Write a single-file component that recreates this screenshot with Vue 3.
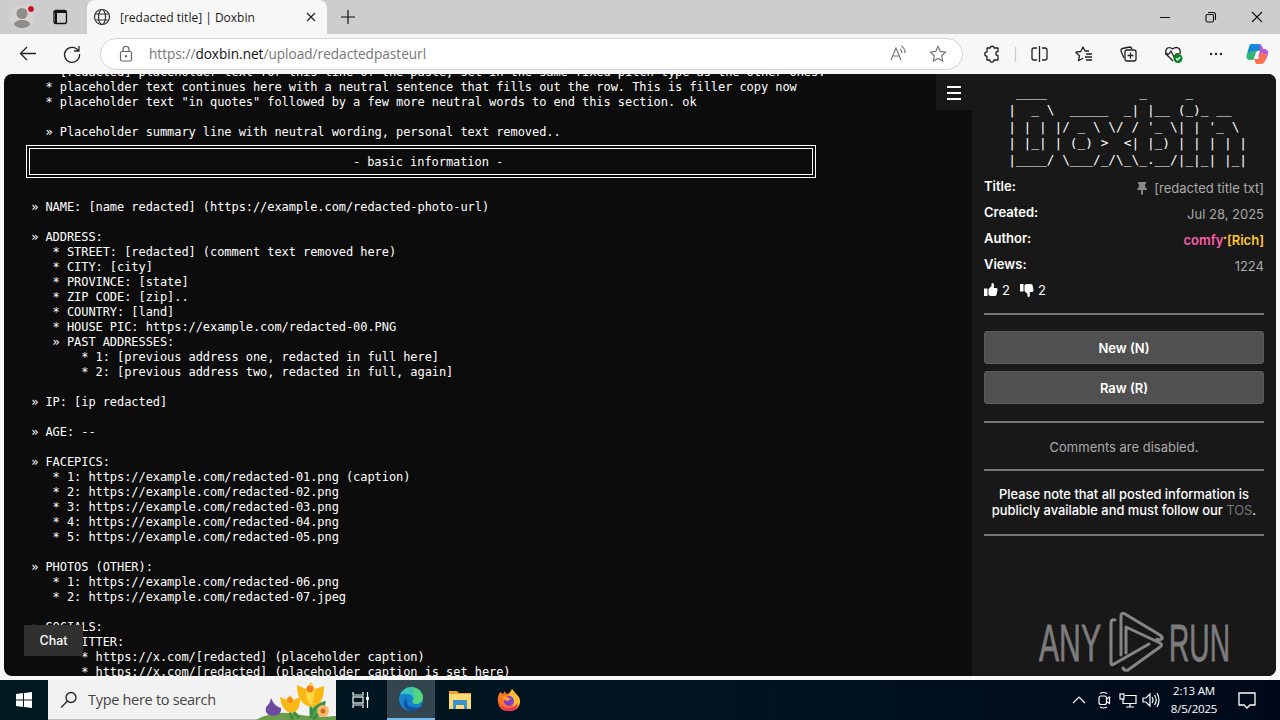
<script setup>
const intro = [
  '   * [redacted] placeholder text for this line of the paste, set in the same fixed pitch type as the other ones.',
  '   * placeholder text continues here with a neutral sentence that fills out the row. This is filler copy now',
  '   * placeholder text "in quotes" followed by a few more neutral words to end this section. ok',
  '',
  '   » Placeholder summary line with neutral wording, personal text removed..',
]
const info = [
  ' » NAME: [name redacted] (https://example.com/redacted-photo-url)',
  '',
  ' » ADDRESS:',
  '    * STREET: [redacted] (comment text removed here)',
  '    * CITY: [city]',
  '    * PROVINCE: [state]',
  '    * ZIP CODE: [zip]..',
  '    * COUNTRY: [land]',
  '    * HOUSE PIC: https://example.com/redacted-00.PNG',
  '    » PAST ADDRESSES:',
  '        * 1: [previous address one, redacted in full here]',
  '        * 2: [previous address two, redacted in full, again]',
  '',
  ' » IP: [ip redacted]',
  '',
  ' » AGE: --',
  '',
  ' » FACEPICS:',
  '    * 1: https://example.com/redacted-01.png (caption)',
  '    * 2: https://example.com/redacted-02.png',
  '    * 3: https://example.com/redacted-03.png',
  '    * 4: https://example.com/redacted-04.png',
  '    * 5: https://example.com/redacted-05.png',
  '',
  ' » PHOTOS (OTHER):',
  '    * 1: https://example.com/redacted-06.png',
  '    * 2: https://example.com/redacted-07.jpeg',
  '',
  ' » SOCIALS:',
  '    » TWITTER:',
  '        * https://x.com/[redacted] (placeholder caption)',
  '        * https://x.com/[redacted] (placeholder caption is set here)',
]
const logo = [
  '  ____            _     _       ',
  ' |  _ \\  _____  _| |__ (_)_ __  ',
  " | | | |/ _ \\ \\/ / '_ \\| | '_ \\ ",
  ' | |_| | (_) >  <| |_) | | | | |',
  ' |____/ \\___/_/\\_\\_.__/|_|_| |_|',
].join('\n')
</script>

<template>
  <div class="screen">
    <header class="tabs">
      <svg class="profile" width="87" height="34" fill="none">
        <circle cx="22" cy="17" r="12" fill="#d5d3d1" />
        <circle cx="22" cy="13.500" r="5.500" fill="#8e8b88" />
        <ellipse cx="22" cy="24" rx="8" ry="4" fill="#8e8b88" />
        <circle cx="31" cy="9" r="3.500" fill="#c50f1f" stroke="#ddd" />
        <rect x="54" y="10.500" width="12.500" height="13" rx="2" stroke="#111" stroke-width="1.300" />
        <path d="M54 12h12.500M56 13v10" stroke="#111" stroke-width="2" />
      </svg>
      <div class="tab">
        <svg width="18" height="18" fill="none" stroke="#333" stroke-width="1.200">
          <circle cx="9" cy="9" r="7.500" /><ellipse cx="9" cy="9" rx="3.500" ry="7.500" /><path d="M2.500 6h13M2.500 12h13" />
        </svg>
        <span class="tab-title">[redacted title] | Doxbin</span>
        <svg width="10" height="10" stroke="#222" stroke-width="1.200"><path d="M1 1l8 8M9 1l-8 8" /></svg>
      </div>
      <svg class="plus" width="14" height="14" stroke="#111" stroke-width="1.200"><path d="M7 0v14M0 7h14" /></svg>
      <svg class="win" width="110" height="20" fill="none" stroke="#111" stroke-width="1.100">
        <path d="M4 10.500h10M96 5l10 10M106 5l-10 10" />
        <rect x="50" y="7.500" width="7.500" height="7.500" rx="1.500" /><path d="M52 5.500h5q2.500 0 2.500 2.500v5" />
      </svg>
    </header>

    <nav class="toolbar">
      <svg class="nav" width="100" height="40" fill="none" stroke="#222" stroke-width="1.300">
        <path d="M36 19.500H20.500M27 13L20.500 19.500l6.500 6.500" />
        <path d="M78.500 17A7.500 7.500 0 1 0 79.500 20M79 12v5h-5" />
      </svg>
      <div class="address">
        <svg width="14" height="16" fill="none" stroke="#666" stroke-width="1.200">
          <rect x="1.500" y="5.500" width="11" height="9.500" rx="1.500" /><path d="M4 5.500V3.500a3 3 0 0 1 6 0v2" /><circle cx="7" cy="10.200" r=".6" fill="#666" />
        </svg>
        <span class="url">https://<b>doxbin.net</b>/upload/redactedpasteurl</span>
        <svg class="addr-icons" width="60" height="20" fill="none" stroke="#777" stroke-width="1.200">
          <path d="M1 16L6 4l5 12M3 12h6M10 5q2 1.500 2 4M11 2q4 2 4 7" />
          <path d="M48 2.500l2.300 4.900 5.300.7-3.900 3.700 1 5.300-4.700-2.600-4.700 2.600 1-5.300-3.900-3.700 5.300-.7z" />
        </svg>
      </div>
      <svg class="tools" width="317" height="40" fill="none" stroke="#222" stroke-width="1.300" stroke-linejoin="round">
        <path d="M24 14h3a2.200 2.200 0 0 1 4.300 0H35v3.500a2 2 0 0 0 0 4.200V26h-4a2.100 2.100 0 0 1-4.200 0H24v-3.800a2.200 2.200 0 0 1 0-4.400z" />
        <path d="M52.500 13v15" stroke="#ccc" />
        <path d="M76.500 12v16M74 14h-3q-2 0-2 2v8q0 2 2 2h3M79 14h3q2 0 2 2v8q0 2-2 2h-3" />
        <path d="M126 17h-4l-2-4-2.200 4.500-5 .7 3.700 3.500-1 5 4.500-2.500M123 20h6M122 23h7M123 26h6" />
        <path d="M161 24l-3-7q-.5-2 1.500-2.500l7-1.500q2 0 2.500 2" /><rect x="162" y="16" width="11" height="11" rx="2" /><path d="M167.500 18.500v6M164.500 21.500h6" />
        <path d="M210 27l-6.500-6.500q-2-4 1-6.500 3-1 5 1 4-3 7 0 1.500 3 0 5M202 20h4l2-3 3 6 2-3h3" />
        <circle cx="215" cy="24.500" r="4.500" fill="#0b8526" stroke="none" /><path d="M213 24.500l1.500 1.500 2.700-3" stroke="#fff" />
        <g fill="#222" stroke="none"><circle cx="248" cy="20" r="1.200" /><circle cx="253" cy="20" r="1.200" /><circle cx="258" cy="20" r="1.200" /></g>
        <g stroke="none">
          <path d="M288 10h9l2 6-5 1-3 8h-4q-5 0-3-5l2-7q.5-3 2-3z" fill="#1788dc" />
          <path d="M284 19l9-3-3 10h-4q-3-.5-2-5z" fill="#35b76b" />
          <path d="M296 10q3 0 4 5h2q4 1 3 5l-2 6-9-4 3-7z" fill="#b55bdc" />
          <path d="M304 20l-2 7q-1 3-4 3h-5l-2-5h4l3-6z" fill="#fb7352" />
          <path d="M293 18l4-1-2 6-4 1z" fill="#f7f7f7" />
        </g>
      </svg>
    </nav>

    <main class="page">
      <section class="paste">
        <pre class="lines"><div v-for="(l, i) in intro" :key="i">{{ l }}</div></pre>
        <div class="banner">- basic information -</div>
        <pre class="lines info"><div v-for="(l, i) in info" :key="i">{{ l }}</div></pre>
        <div class="menu"><i /><i /><i /></div>
        <button class="chat">Chat</button>
      </section>

      <aside class="side">
        <pre class="logo">{{ logo }}</pre>
        <dl>
          <div><dt>Title:</dt><dd>
            <svg width="10" height="13" fill="#888"><path d="M1 0h8v2H8l.4 3.500Q10 6.500 10 8H6v4l-1 1-1-1V8H0q0-1.500 1.600-2.500L2 2H1z" /></svg>[redacted title txt]
          </dd></div>
          <div><dt>Created:</dt><dd>Jul 28, 2025</dd></div>
          <div><dt>Author:</dt><dd class="author"><span>comfy</span><i>•</i>[Rich]</dd></div>
          <div><dt>Views:</dt><dd>1224</dd></div>
        </dl>
        <div class="votes">
          <svg width="14" height="14" fill="#fff"><path d="M0 5.500h3.500V13H0zM4.500 6l3-3V1q0-1 1-1 2 0 1.200 5H12q2 0 1.500 2L12.500 12q-.5 1-2 1h-4l-2-1z" /></svg>2
          <svg class="down" width="14" height="14" fill="#fff"><path d="M0 1h3.500v7.500H0zM4.500 8l3 3v2q0 1 1 1 2 0 1.200-5H12q2 0 1.500-2L12.500 2q-.5-1-2-1h-4l-2 1z" /></svg>2
        </div>
        <hr />
        <button class="btn">New (N)</button>
        <button class="btn">Raw (R)</button>
        <hr class="second" />
        <p class="disabled">Comments are disabled.</p>
        <hr />
        <p class="note">Please note that all posted information is<br />publicly available and must follow our <span>TOS</span>.</p>
        <hr />
        <svg class="watermark" width="210" height="66" fill="none">
          <g fill="#7c7c7c" stroke="#7c7c7c" stroke-width=".8" font-family="Liberation Sans" font-size="52">
            <text x="1" y="51" textLength="62" lengthAdjust="spacingAndGlyphs">ANY</text>
            <text x="131" y="51" textLength="61" lengthAdjust="spacingAndGlyphs">RUN</text>
          </g>
          <g stroke="#858585" stroke-width="3" stroke-linejoin="round" stroke-linecap="round">
            <path d="M77 10q-4-1-4 3v40q0 3 3 1l35-20" />
            <path d="M83 45V6q0-4 4-2l35 21q4 3 1 4-1 2-4 0" />
            <path d="M88 43V17l34 16q3 2 0 4L90 60q-4 1-5-2" />
          </g>
        </svg>
      </aside>
    </main>

    <footer class="taskbar">
      <div class="start"><svg width="16" height="16" fill="#fff"><path d="M0 2l7-1v6.500H0zM8 1l8-1v7.500H8zM0 8.500h7V15l-7-1zM8 8.500h8V16l-8-1z" /></svg></div>
      <div class="search">
        <svg width="18" height="18" fill="none" stroke="#222" stroke-width="1.300"><circle cx="11" cy="6.500" r="5" /><path d="M7.500 10L1 16.500" /></svg>
        <span>Type here to search</span>
        <svg class="flowers" width="80" height="40">
          <path d="M0 40q18-10 38-6t42 2v4z" fill="#6b9c4c" />
          <path d="M34 26q0 10 3 13M55 18v20M43 38q-6-8-10-8M55 36q2-10 13-13-1 9-11 16" stroke="#3c8f42" stroke-width="3" fill="#4ba654" />
          <path d="M15 18q-1 6-5 9-2 8 7 9 9-1 8-8-7-2-10-10z" fill="#6d4aa0" />
          <path d="M24 17l7 3 3-5 3 5 7-3q1 14-8 16-10-1-12-16z" fill="#f9b916" />
          <path d="M41 5l9 4 5-7 4 7 9-3q1 19-13 21-14-3-14-22z" fill="#fcb714" />
          <path d="M50 10l5-7 4 7-3 16q-6-4-6-16z" fill="#ffda45" />
          <circle cx="54" cy="9" r="3.500" fill="#ef7f16" /><circle cx="34" cy="20" r="3" fill="#f28b16" />
          <circle cx="67" cy="31" r="6" fill="#f6bb67" /><circle cx="67" cy="31" r="2.500" fill="#d96323" />
        </svg>
      </div>
      <div class="task">
        <svg width="18" height="18" fill="none" stroke="#fff" stroke-width="1.200"><path d="M1 1v3h10V1M1 17v-3h10v3M15.500 1v16" /><rect x="1" y="6" width="10" height="6" /><path d="M14 6h3v3h-3z" fill="#fff" stroke="none" /></svg>
      </div>
      <div class="task active">
        <svg width="26" height="26">
          <circle cx="13" cy="13" r="12" fill="#1683cf" />
          <path d="M2 9Q6 1 13 1q11 1 12 11-1 6-8 6-4-1-2-4 1-5-5-6-5-1-8 1z" fill="#3bc5b1" />
          <path d="M15 1q10 2 10 12-2 5-8 5-3-1-2-3 4-6-1-14z" fill="#5cd96c" opacity=".75" />
          <path d="M9 11q-3 13 14 10-6 6-13 3-8-5-1-13z" fill="#12519b" />
        </svg>
      </div>
      <div class="task">
        <svg width="22" height="20"><path d="M0 1h8l2 2h12v16H0z" fill="#e9a52b" /><path d="M0 4h22v15H0z" fill="#ffda72" /><path d="M4 10h14v9h-3v-4H7v4H4z" fill="#3c91cf" /></svg>
      </div>
      <div class="task">
        <svg width="24" height="24">
          <path d="M3 4l3 2 2-3 1 3q4 0 6-5l4 5q4 3 4 8-1 9-11 9T1 14Q0 9 3 4z" fill="#ff7526" />
          <path d="M15 1l4 5q4 3 4 8-1 7-8 7 4-8-3-14z" fill="#ffbd2f" />
          <path d="M2 14q3 7 11 6 6-1 8-6 0 9-9 9-9-1-10-9z" fill="#f22c60" />
          <circle cx="12" cy="13" r="5" fill="#7b3fd0" /><path d="M5 9q4-2 7 1l2 1-3 2q-4 0-6-4z" fill="#ff9b27" />
        </svg>
      </div>
      <svg class="tray" width="88" height="20" fill="none" stroke="#fff" stroke-width="1.200">
        <path d="M1 13l6-6 6 6" />
        <rect x="27" y="6" width="7.500" height="8.500" rx="2" /><path d="M34.500 9l3-2v6.500l-3-2M28 3.500q3.500-2 7 0M28 17q3.500 2 7 0" />
        <path d="M53 5.500h11v8H51V9M58 14v3M54 17h8" /><rect x="48" y="4" width="4" height="5" />
        <path d="M71 8h3l4-4v12l-4-4h-3zM80 7q2 3 0 6M82.500 5q3.500 5 0 10M85 3q4 7 0 14" />
      </svg>
      <div class="clock"><span>2:13 AM</span><span>8/5/2025</span></div>
      <svg class="notice" width="18" height="18" fill="none" stroke="#fff" stroke-width="1.300"><path d="M1 2h16v12h-5l-3 3-3-3H1z" /></svg>
    </footer>
  </div>
</template>

<style>
body { overflow: hidden; }
</style>

<style scoped>
* { box-sizing: border-box; }
svg { display: block; flex: none; }
.screen { width: 1280px; height: 720px; display: flex; flex-direction: column; background: #f7f7f7; font-family: "Open Sans", "Noto Sans", sans-serif; overflow: hidden; }
.tabs { height: 34px; display: flex; align-items: center; background: #cdcdcd; }
.tab { width: 240px; height: 34px; display: flex; align-items: center; padding: 0 11px 0 6px; border-radius: 8px 8px 0 0; background: #f7f7f7; }
.tab-title { flex: 1; margin-left: 9px; font-size: 12px; color: #1b1b1b; white-space: nowrap; }
.plus { margin-left: 14px; }
.win { margin: 0 14px 0 auto; }
.toolbar { height: 40px; display: flex; align-items: center; }
.address { width: 863px; height: 32px; display: flex; align-items: center; padding: 0 12px 0 18px; border: 1px solid #d4d4d4; border-radius: 16px; background: #fff; }
.url { margin-left: 16px; font-size: 13.6px; line-height: 18px; margin-top: -1px; color: #767676; white-space: nowrap; }
.url b { font-weight: 400; color: #111; }
.addr-icons { margin-left: auto; }
.page { display: flex; height: 602px; margin: 0 4px; border-radius: 8px; overflow: hidden; background: #0c0c0c; }
.paste { position: relative; width: 968px; height: 602px; overflow: hidden; padding-left: 20px; font-family: "DejaVu Sans Mono", monospace; font-size: 12px; letter-spacing: -.07px; color: #fff; }
.lines { height: 75px; margin: -9px 0 0; font: inherit; line-height: 15px; }
.lines div { height: 15px; }
.banner { width: 790px; height: 33px; margin: 5px 0 0 2px; border: 4px double #fff; line-height: 26px; text-align: center; padding-left: 14px; }
.info { height: auto; margin-top: 22px; }
.menu { position: absolute; top: 0; right: 0; width: 36px; height: 36px; display: flex; flex-direction: column; align-items: center; justify-content: center; gap: 4px; padding-top: 1px; background: #181818; }
.menu i { width: 14px; height: 2px; background: #fff; }
.chat { position: absolute; left: 20px; top: 551px; width: 59px; height: 31px; border: 0; padding: 0; background: #303030; color: #fff; font: 500 12.5px Inter, sans-serif; }
.side { width: 304px; padding: 15px 12px 0; background: #181818; color: #fff; font: 13px/16px Inter, sans-serif; display: flex; flex-direction: column; }
.logo { height: 84px; flex: none; margin: -4px 0 4px 16.500px; font: 12.8px/16.8px "DejaVu Sans Mono", monospace; }
dl { margin: 5px 0 0; }
dl > div { display: flex; justify-content: space-between; height: 26px; }
dt { font-weight: 600; line-height: 17px; }
dd { display: flex; align-items: center; height: 20px; margin: 0; color: #aaa; white-space: nowrap; }
dd svg { margin-right: 7px; }
.author { color: #ffc82e; font-weight: 600; }
.author span { color: #ff5ca8; }
.author i { margin-top: -4px; font-size: 7px; font-style: normal; }
.votes { display: flex; align-items: center; gap: 4px; height: 16px; }
.down { margin-left: 6px; }
hr { flex: none; width: 280px; height: 2px; margin: 15px 0 16px; border: 0; background: #747474; }
.btn { width: 280px; height: 33px; margin-bottom: 7px; border: 1px solid #5c5c5c; border-radius: 3px; background: #505050; color: #fff; font: 600 13px Inter, sans-serif; }
.second { margin-top: 10px; }
p { margin: 0; text-align: center; }
.disabled { color: #aaa; height: 15px; }
.note { font-weight: 500; font-size: 12.9px; white-space: nowrap; }
.note span { color: #777; font-weight: 400; }
.watermark { margin: 58px 0 0 54px; }
.taskbar { height: 40px; margin-top: 4px; display: flex; align-items: center; background: linear-gradient(90deg, #001820, #001421 55%, #000919); color: #fff; }
.start { width: 48px; display: flex; justify-content: center; }
.search { width: 288px; height: 40px; display: flex; align-items: center; padding-left: 12px; background: #f2f2f2; border-bottom: 1px solid #bbb; color: #444; font-size: 14.5px; white-space: nowrap; }
.search span { margin-left: 10px; letter-spacing: -.3px; }
.flowers { margin-left: auto; }
.task { width: 49px; height: 40px; display: flex; align-items: center; justify-content: center; }
.active { margin-left: 2px; width: 48px; background: #33454e; border-bottom: 2px solid #76b9ed; }
.tray { margin-left: auto; }
.clock { width: 66px; margin-left: 1px; display: flex; flex-direction: column; align-items: center; font-size: 11.5px; line-height: 18px; letter-spacing: -.2px; }
.notice { margin: 0 24px 0 11px; }
</style>
